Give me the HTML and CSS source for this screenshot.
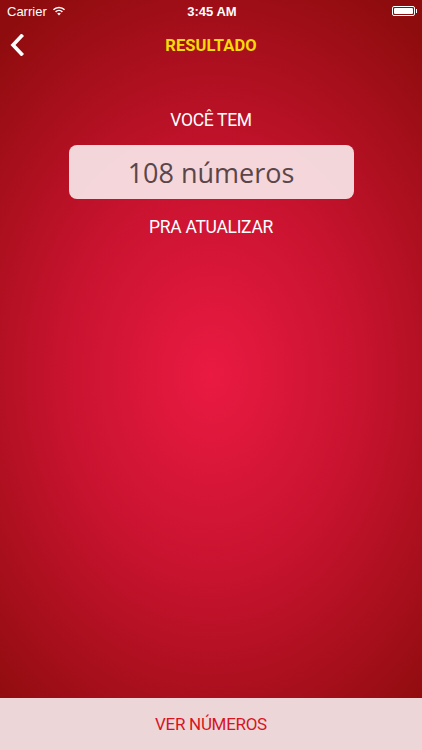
FILE: index.html
```html
<!DOCTYPE html>
<html>
<head>
<meta charset="utf-8">
<link rel="stylesheet" href="styles.css">
</head>
<body>
<div class="screen">
  <div class="status">
    <div class="status-left">
      <span>Carrier</span>
      <svg class="wifi" width="14" height="10" viewBox="0 0 14 10">
        <path d="M7 9.6 L5.2 7.6 A2.6 2.6 0 0 1 8.8 7.6 Z" fill="#fff"/>
        <path d="M3.6 5.9 A4.9 4.9 0 0 1 10.4 5.9" stroke="#fff" stroke-width="1.5" fill="none"/>
        <path d="M1.4 3.7 A8 8 0 0 1 12.6 3.7" stroke="#fff" stroke-width="1.5" fill="none"/>
      </svg>
    </div>
    <div class="status-time">3:45 AM</div>
    <div class="status-right">
      <div class="battery"><div class="battery-fill"></div></div>
      <div class="battery-tip"></div>
    </div>
  </div>
  <div class="nav">
    <svg class="back" width="14" height="22" viewBox="0 0 14 22">
      <path d="M11.5 2 L3 11 L11.5 20" stroke="#fff" stroke-width="3.6" fill="none" stroke-linecap="square"/>
    </svg>
    <div class="title">RESULTADO</div>
  </div>
  <main class="content">
    <div class="label">VOCÊ TEM</div>
    <div class="count">108 números</div>
    <div class="label label-sub">PRA ATUALIZAR</div>
  </main>
  <div class="footer">VER NÚMEROS</div>
</div>
</body>
</html>
```
FILE: styles.css
```css
* { box-sizing: border-box; }
html, body { margin: 0; padding: 0; }
body {
  width: 422px;
  height: 750px;
  overflow: hidden;
  font-family: Roboto, "Liberation Sans", sans-serif;
}
.screen {
  width: 422px;
  height: 750px;
  display: flex;
  flex-direction: column;
  background: radial-gradient(ellipse 330px 440px at 211px 375px, #ea1a42 0%, #c8132f 45%, #8e0c0d 100%);
  color: #fff;
}
.status {
  height: 22px;
  display: flex;
  align-items: center;
  justify-content: space-between;
  padding: 0 5px 0 7px;
  font-family: "Liberation Sans", Arial, sans-serif;
  font-size: 13px;
}
.status-left { display: flex; align-items: center; gap: 5px; width: 80px; }
.status-time {
  font-weight: bold;
  font-size: 13px;
}
.status-right { display: flex; align-items: center; justify-content: flex-end; width: 80px; }
.battery {
  width: 23px;
  height: 10px;
  border: 1px solid #fff;
  border-radius: 2px;
  padding: 1px;
}
.battery-fill { width: 100%; height: 100%; background: #fff; border-radius: 1px; }
.battery-tip { width: 1.5px; height: 4px; background: #fff; margin-left: 1px; }
.nav {
  height: 46px;
  display: flex;
  align-items: center;
  justify-content: center;
  position: relative;
}
.back { position: absolute; left: 10px; top: 12px; }
.title {
  color: #f6d90a;
  font-weight: bold;
  font-size: 16.5px;
  letter-spacing: 0.1px;
}
.content {
  flex: 1;
  display: flex;
  flex-direction: column;
  align-items: center;
  padding-top: 42px;
}
.label {
  font-size: 17.5px;
  line-height: 20px;
  letter-spacing: -0.3px;
}
.count {
  margin-top: 15px;
  width: 285px;
  height: 54px;
  border-radius: 8px;
  background: rgba(250, 236, 238, 0.9);
  color: #5a4649;
  font-family: "Open Sans", sans-serif;
  font-size: 27px;
  display: flex;
  align-items: center;
  justify-content: center;
}
.label-sub { margin-top: 18px; }
.footer {
  height: 52px;
  background: #ecd6d8;
  color: #d8141f;
  font-size: 17px;
  letter-spacing: -0.3px;
  display: flex;
  align-items: center;
  justify-content: center;
}
```
